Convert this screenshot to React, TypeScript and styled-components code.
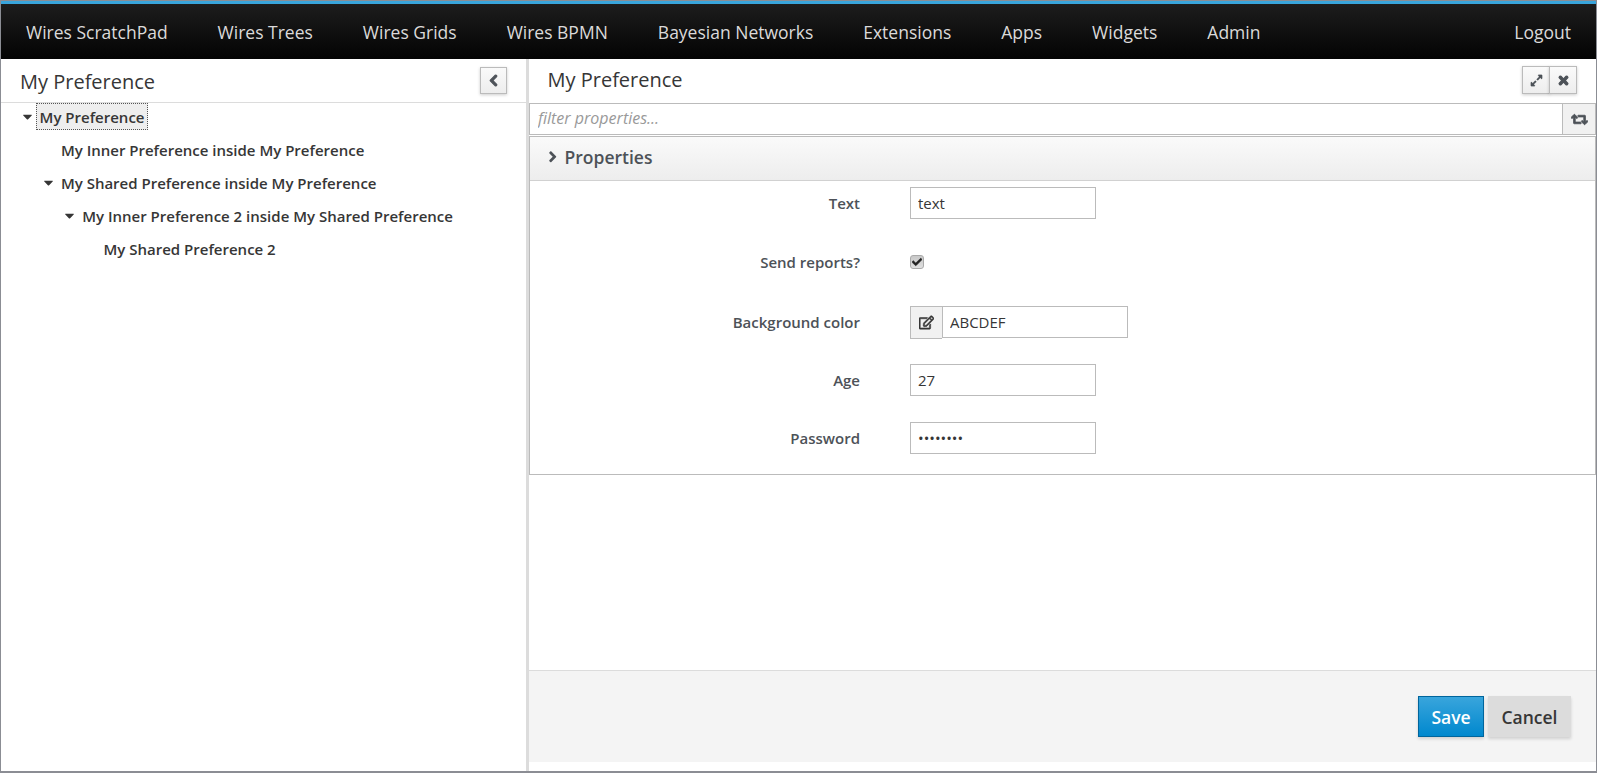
import React from "react";
import styled, { createGlobalStyle } from "styled-components";
import { FaAngleRight, FaCaretDown, FaCheck, FaChevronLeft, FaExpandAlt, FaRegEdit, FaRetweet, FaTimes } from "react-icons/fa";

const Global = createGlobalStyle`
  html, body { margin: 0; padding: 0; background: #fff; }
  body { font-family: "Open Sans", "Liberation Sans", sans-serif; color: #363636; }
  * { box-sizing: border-box; }
`;

const Frame = styled.div`
  width: 1597px;
  height: 773px;
  display: flex;
  flex-direction: column;
  overflow: hidden;
  background: #fff;
  border-top: 1px solid #8b8d94;
  border-left: 1px solid #8b8d94;
  border-right: 1px solid #8b8d94;
  border-bottom: 2px solid #8b8d94;
`;

const Nav = styled.nav`
  height: 58px;
  flex: none;
  display: flex;
  align-items: center;
  padding: 0 25px;
  gap: 50px;
  border-top: 3px solid #39a5dc;
  background: linear-gradient(to bottom, #1d1d1d 0%, #030303 100%);
`;

const NavLink = styled.a<{ $end?: boolean }>`
  font-size: 17.5px;
  line-height: 24px;
  color: #dbdada;
  margin-left: ${(p) => (p.$end ? "auto" : "0")};
`;

const Main = styled.div`
  flex: 1;
  min-height: 0;
  display: flex;
`;

const LeftPane = styled.aside`
  width: 525px;
  flex: none;
  display: flex;
  flex-direction: column;
`;

const Splitter = styled.div`
  width: 3px;
  flex: none;
  background: #dcdcdc;
`;

const RightPane = styled.section`
  flex: 1;
  min-width: 0;
  display: flex;
  flex-direction: column;
`;

const PaneHeader = styled.header<{ $left?: boolean }>`
  height: 44px;
  flex: none;
  display: flex;
  align-items: center;
  justify-content: space-between;
  padding: ${(p) => (p.$left ? "0 19px" : "0 19px 0 18.5px")};
  ${(p) => (p.$left ? "border-bottom: 1px solid #dcdcdc;" : "")}
`;

const PaneTitle = styled.h2<{ $left?: boolean }>`
  margin: ${(p) => (p.$left ? "2px 0 0" : "-2px 0 0")};
  font-size: 20px;
  line-height: 28px;
  font-weight: 400;
  color: #363636;
`;

const ToolGroup = styled.div`
  display: flex;
  margin-top: -2px;
  button {
    width: 28px;
    height: 28px;
  }
`;

const ToolButton = styled.button<{ $stroke?: number }>`
  width: 27px;
  height: 27px;
  padding: 0;
  display: flex;
  align-items: center;
  justify-content: center;
  font-size: 13px;
  color: #4d5258;
  border: 1px solid #bbb;
  background: linear-gradient(to bottom, #fafafa, #ededed);
  box-shadow: 0 1px 3px rgba(0, 0, 0, 0.2);
  svg {
    stroke: currentColor;
    stroke-width: ${(p) => p.$stroke ?? 44};
  }
  & + & {
    margin-left: -1px;
  }
`;

const Tree = styled.ul`
  list-style: none;
  margin: -3px 0 0;
  padding: 0;
`;

const TreeRow = styled.li<{ $depth: number }>`
  height: 33px;
  display: flex;
  align-items: center;
  padding-left: ${(p) => 19.6 + p.$depth * 21.3}px;
`;

const Caret = styled.span<{ $hidden?: boolean }>`
  width: 16px;
  flex: none;
  display: flex;
  font-size: 15px;
  margin-left: -1px;
  color: #363636;
  visibility: ${(p) => (p.$hidden ? "hidden" : "visible")};
`;

const NodeLabel = styled.span<{ $selected?: boolean }>`
  height: 27px;
  display: flex;
  align-items: center;
  padding: 0 3px;
  font-size: 15px;
  font-weight: 600;
  white-space: nowrap;
  color: #363636;
  border: 1px dotted ${(p) => (p.$selected ? "#555" : "transparent")};
  background: ${(p) => (p.$selected ? "#eeeeee" : "transparent")};
`;

const FilterBar = styled.div`
  height: 32px;
  flex: none;
  display: flex;
  border: 1px solid #bbb;
`;

const FilterInput = styled.input`
  flex: 1;
  min-width: 0;
  border: 0;
  outline: 0;
  padding: 0 8px 2px;
  font: italic 16px "Open Sans", sans-serif;
  color: #363636;
  &::placeholder {
    color: #999;
    opacity: 1;
  }
`;

const FilterButton = styled.button`
  width: 33px;
  padding: 0;
  border: 0;
  border-left: 1px solid #bbb;
  display: flex;
  align-items: center;
  justify-content: center;
  font-size: 17px;
  color: #4d5258;
  background: #f1f1f1;
  svg {
    stroke: currentColor;
    stroke-width: 30;
  }
`;

const Panel = styled.section`
  flex: none;
  margin: 1px 0 0;
  border: 1px solid #bbb;
`;

const PanelHeading = styled.div`
  height: 44px;
  display: flex;
  align-items: center;
  gap: 3px;
  padding: 0 0 3px 14px;
  font-size: 17.5px;
  font-weight: 600;
  color: #4d5258;
  background: linear-gradient(to bottom, #fafafa, #ededed);
  border-bottom: 1px solid #d1d1d1;
`;

const PanelBody = styled.div`
  padding: 6px 0 20px;
  display: flex;
  flex-direction: column;
  gap: 25px;
`;

const FormRow = styled.div<{ $tall?: boolean; $loose?: boolean }>`
  display: grid;
  grid-template-columns: 330px 1fr;
  column-gap: 50px;
  align-items: center;
  min-height: ${(p) => (p.$tall ? "37px" : "32px")};
  padding-bottom: ${(p) => (p.$tall ? "2px" : "0")};
  margin-top: ${(p) => (p.$loose ? "1px" : "0")};
`;

const FieldLabel = styled.label`
  text-align: right;
  font-size: 15px;
  font-weight: 600;
  color: #4d5258;
`;

const TextField = styled.input`
  width: 186px;
  height: 32px;
  padding: 0 7px;
  border: 1px solid #bbb;
  outline: 0;
  background: #fff;
  font: 15px "Open Sans", sans-serif;
  color: #363636;
`;

const CheckBox = styled.span`
  width: 14px;
  height: 14px;
  display: flex;
  align-items: center;
  justify-content: center;
  font-size: 10px;
  color: #222;
  border: 1px solid #aaa;
  border-radius: 3px;
  background: linear-gradient(to bottom, #c8c8c8, #e0e0e0);
  svg {
    stroke: currentColor;
    stroke-width: 30;
  }
`;

const InputGroup = styled.div`
  display: flex;
  height: 32px;
`;

const Addon = styled.span`
  width: 32px;
  height: 33px;
  flex: none;
  display: flex;
  align-items: center;
  justify-content: center;
  font-size: 15px;
  color: #363636;
  background: #f1f1f1;
  border: 1px solid #bbb;
  border-right: 0;
  svg {
    stroke: currentColor;
    stroke-width: 20;
  }
`;

const Footer = styled.footer`
  margin-top: auto;
  margin-bottom: 9px;
  height: 92px;
  flex: none;
  display: flex;
  justify-content: flex-end;
  align-items: flex-start;
  gap: 4px;
  padding: 25px 25px 0 0;
  background: #f4f4f4;
  border-top: 1px solid #dcdcdc;
`;

const ActionButton = styled.button<{ $primary?: boolean }>`
  height: 41px;
  padding: 0;
  width: ${(p) => (p.$primary ? "66px" : "83px")};
  font: 600 17.5px "Open Sans", sans-serif;
  color: ${(p) => (p.$primary ? "#fff" : "#363636")};
  border: 1px solid ${(p) => (p.$primary ? "#00659c" : "#dcdcdc")};
  background: ${(p) => (p.$primary ? "linear-gradient(to bottom, #39a5dc, #0088ce)" : "#dcdcdc")};
  box-shadow: 0 2px 3px rgba(0, 0, 0, 0.15);
`;

const tree = [
  { label: "My Preference", depth: 0, open: true, selected: true },
  { label: "My Inner Preference inside My Preference", depth: 1, open: false },
  { label: "My Shared Preference inside My Preference", depth: 1, open: true },
  { label: "My Inner Preference 2 inside My Shared Preference", depth: 2, open: true },
  { label: "My Shared Preference 2", depth: 3, open: false },
];

const links = ["Wires ScratchPad", "Wires Trees", "Wires Grids", "Wires BPMN", "Bayesian Networks", "Extensions", "Apps", "Widgets", "Admin"];

export default function App() {
  return (
    <Frame>
      <Global />
      <Nav>
        {links.map((l) => (
          <NavLink key={l}>{l}</NavLink>
        ))}
        <NavLink $end>Logout</NavLink>
      </Nav>
      <Main>
        <LeftPane>
          <PaneHeader $left>
            <PaneTitle $left>My Preference</PaneTitle>
            <ToolButton>
              <FaChevronLeft />
            </ToolButton>
          </PaneHeader>
          <Tree>
            {tree.map((n) => (
              <TreeRow key={n.label} $depth={n.depth}>
                <Caret $hidden={!n.open}>
                  <FaCaretDown />
                </Caret>
                <NodeLabel $selected={n.selected}>{n.label}</NodeLabel>
              </TreeRow>
            ))}
          </Tree>
        </LeftPane>
        <Splitter />
        <RightPane>
          <PaneHeader>
            <PaneTitle>My Preference</PaneTitle>
            <ToolGroup>
              <ToolButton $stroke={10}>
                <FaExpandAlt />
              </ToolButton>
              <ToolButton>
                <FaTimes />
              </ToolButton>
            </ToolGroup>
          </PaneHeader>
          <FilterBar>
            <FilterInput placeholder="filter properties..." />
            <FilterButton>
              <FaRetweet />
            </FilterButton>
          </FilterBar>
          <Panel>
            <PanelHeading>
              <FaAngleRight />
              Properties
            </PanelHeading>
            <PanelBody>
              <FormRow>
                <FieldLabel>Text</FieldLabel>
                <TextField defaultValue="text" />
              </FormRow>
              <FormRow $tall>
                <FieldLabel>Send reports?</FieldLabel>
                <CheckBox>
                  <FaCheck />
                </CheckBox>
              </FormRow>
              <FormRow>
                <FieldLabel>Background color</FieldLabel>
                <InputGroup>
                  <Addon>
                    <FaRegEdit />
                  </Addon>
                  <TextField defaultValue="ABCDEF" />
                </InputGroup>
              </FormRow>
              <FormRow $loose>
                <FieldLabel>Age</FieldLabel>
                <TextField defaultValue="27" />
              </FormRow>
              <FormRow $loose>
                <FieldLabel>Password</FieldLabel>
                <TextField type="password" defaultValue="abcdefgh" />
              </FormRow>
            </PanelBody>
          </Panel>
          <Footer>
            <ActionButton $primary>Save</ActionButton>
            <ActionButton>Cancel</ActionButton>
          </Footer>
        </RightPane>
      </Main>
    </Frame>
  );
}
